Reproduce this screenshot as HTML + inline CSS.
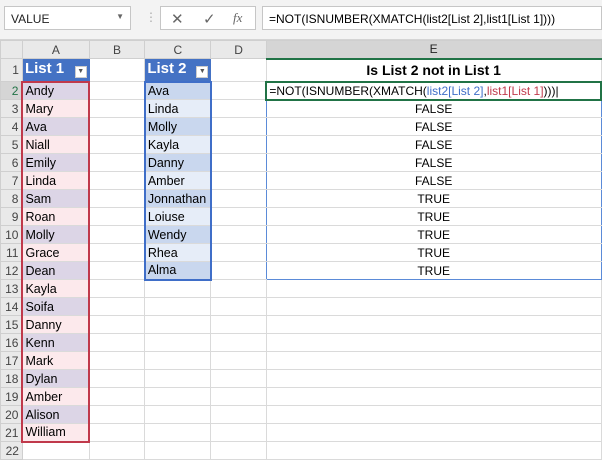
<!DOCTYPE html>
<html><head><meta charset="utf-8"><style>
*{margin:0;padding:0;box-sizing:border-box}
body{width:602px;height:449px;overflow:hidden;background:#fff;font-family:"Liberation Sans",sans-serif;font-size:12.5px;color:#000;position:relative}
.top{position:absolute;left:0;top:0;width:602px;height:40px;background:#f3f3f3;border-bottom:1px solid #d4d4d4}
.nb{position:absolute;left:4px;top:6px;width:127px;height:24px;background:#fff;border:1px solid #c6c6c6;font-size:12px;padding:5px 6px;color:#222}
.fb{position:absolute;left:160px;top:6px;width:96px;height:24px;background:#fff;border:1px solid #c6c6c6}
.fx{position:absolute;left:262px;top:6px;width:340px;height:24px;background:#fff;border:1px solid #c6c6c6;font-size:12px;padding:5px 6px}
table{position:absolute;left:0;top:40px;border-collapse:collapse;table-layout:fixed}
td{border:1px solid #dadada;height:18px;padding:0 2px;white-space:nowrap;overflow:hidden;line-height:16px}
tr.h td{background:#e9e9e9;color:#444;text-align:center;height:18px;border-color:#cfcfcf;font-size:12px}
td.r{background:#e9e9e9;color:#444;text-align:right;padding-right:3px;border-color:#cfcfcf;font-size:12px}
tr.one td{height:23px}
.a1,.a2{border-left:2px solid #c0394b;border-right:2px solid #c0394b}
.a1{background:#dcd5e6}.a2{background:#fce9ec}
.c1,.c2{border-left:2px solid #3f6ec8;border-right:2px solid #3f6ec8}
.c1{background:#c9d7ee}.c2{background:#e6edf8}
.hd{background:#4472c4;color:#fff;font-weight:bold;font-size:15px;border-color:#4472c4}
.dd{float:right;width:12px;height:12px;background:#fff;margin-top:5px;border:1px solid #ccc;font-size:7px;color:#555;text-align:center;line-height:10px}
.e{text-align:center;font-size:12px;border-left:1px solid #5b8bd8;border-right:1px solid #5b8bd8}
.dl{border-right:1px solid #5b8bd8}
</style></head><body>
<div class="top">
<div class="nb">VALUE<span style="position:absolute;right:6px;top:5px;font-size:8px;color:#666">▼</span></div>
<div style="position:absolute;left:145px;top:10px;color:#aaa;font-size:12px">⋮</div>
<div class="fb"><span style="position:absolute;left:10px;top:3px;font-size:15px;color:#666">✕</span><span style="position:absolute;left:42px;top:3px;font-size:15px;color:#666">✓</span><span style="position:absolute;left:72px;top:3px;font-size:13px;font-style:italic;font-family:'Liberation Serif',serif;color:#666">fx</span></div>
<div class="fx">=NOT(ISNUMBER(XMATCH(list2[List 2],list1[List 1])))</div>
</div>
<table>
<colgroup><col style="width:22px"><col style="width:67px"><col style="width:56px"><col style="width:66px"><col style="width:56px"><col style="width:335px"></colgroup>
<tr class="h"><td></td><td>A</td><td>B</td><td>C</td><td>D</td><td style="background:#d5d5d5;border-bottom:2px solid #217346;color:#222">E</td></tr>
<tr class="one"><td class="r">1</td><td class="hd">List 1<span class="dd">▼</span></td><td></td><td class="hd">List 2<span class="dd">▼</span></td><td></td><td style="text-align:center;font-weight:bold;font-size:14px">Is List 2 not in List 1</td></tr>
<tr><td class="r" style="background:#d5d5d5;color:#217346">2</td><td class="a1" style="border-top:2px solid #c0394b">Andy</td><td></td><td class="c1" style="border-top:2px solid #3f6ec8">Ava</td><td></td><td style="border:2px solid #217346;font-size:12px">=NOT(ISNUMBER(XMATCH(<span style="color:#3f6ec8">list2[List 2]</span>,<span style="color:#c0394b">list1[List 1]</span>)))|</td></tr>
<tr><td class="r">3</td><td class="a2">Mary</td><td></td><td class="c2">Linda</td><td class="dl"></td><td class="e">FALSE</td></tr>
<tr><td class="r">4</td><td class="a1">Ava</td><td></td><td class="c1">Molly</td><td class="dl"></td><td class="e">FALSE</td></tr>
<tr><td class="r">5</td><td class="a2">Niall</td><td></td><td class="c2">Kayla</td><td class="dl"></td><td class="e">FALSE</td></tr>
<tr><td class="r">6</td><td class="a1">Emily</td><td></td><td class="c1">Danny</td><td class="dl"></td><td class="e">FALSE</td></tr>
<tr><td class="r">7</td><td class="a2">Linda</td><td></td><td class="c2">Amber</td><td class="dl"></td><td class="e">FALSE</td></tr>
<tr><td class="r">8</td><td class="a1">Sam</td><td></td><td class="c1">Jonnathan</td><td class="dl"></td><td class="e">TRUE</td></tr>
<tr><td class="r">9</td><td class="a2">Roan</td><td></td><td class="c2">Loiuse</td><td class="dl"></td><td class="e">TRUE</td></tr>
<tr><td class="r">10</td><td class="a1">Molly</td><td></td><td class="c1">Wendy</td><td class="dl"></td><td class="e">TRUE</td></tr>
<tr><td class="r">11</td><td class="a2">Grace</td><td></td><td class="c2">Rhea</td><td class="dl"></td><td class="e">TRUE</td></tr>
<tr><td class="r">12</td><td class="a1">Dean</td><td></td><td class="c1" style="border-bottom:2px solid #3f6ec8">Alma</td><td class="dl"></td><td class="e" style="border-bottom:1px solid #5b8bd8">TRUE</td></tr>
<tr><td class="r">13</td><td class="a2">Kayla</td><td></td><td></td><td></td><td></td></tr>
<tr><td class="r">14</td><td class="a1">Soifa</td><td></td><td></td><td></td><td></td></tr>
<tr><td class="r">15</td><td class="a2">Danny</td><td></td><td></td><td></td><td></td></tr>
<tr><td class="r">16</td><td class="a1">Kenn</td><td></td><td></td><td></td><td></td></tr>
<tr><td class="r">17</td><td class="a2">Mark</td><td></td><td></td><td></td><td></td></tr>
<tr><td class="r">18</td><td class="a1">Dylan</td><td></td><td></td><td></td><td></td></tr>
<tr><td class="r">19</td><td class="a2">Amber</td><td></td><td></td><td></td><td></td></tr>
<tr><td class="r">20</td><td class="a1">Alison</td><td></td><td></td><td></td><td></td></tr>
<tr><td class="r">21</td><td class="a2" style="border-bottom:2px solid #c0394b">William</td><td></td><td></td><td></td><td></td></tr>
<tr><td class="r">22</td><td></td><td></td><td></td><td></td><td></td></tr>
</table>
</body></html>
